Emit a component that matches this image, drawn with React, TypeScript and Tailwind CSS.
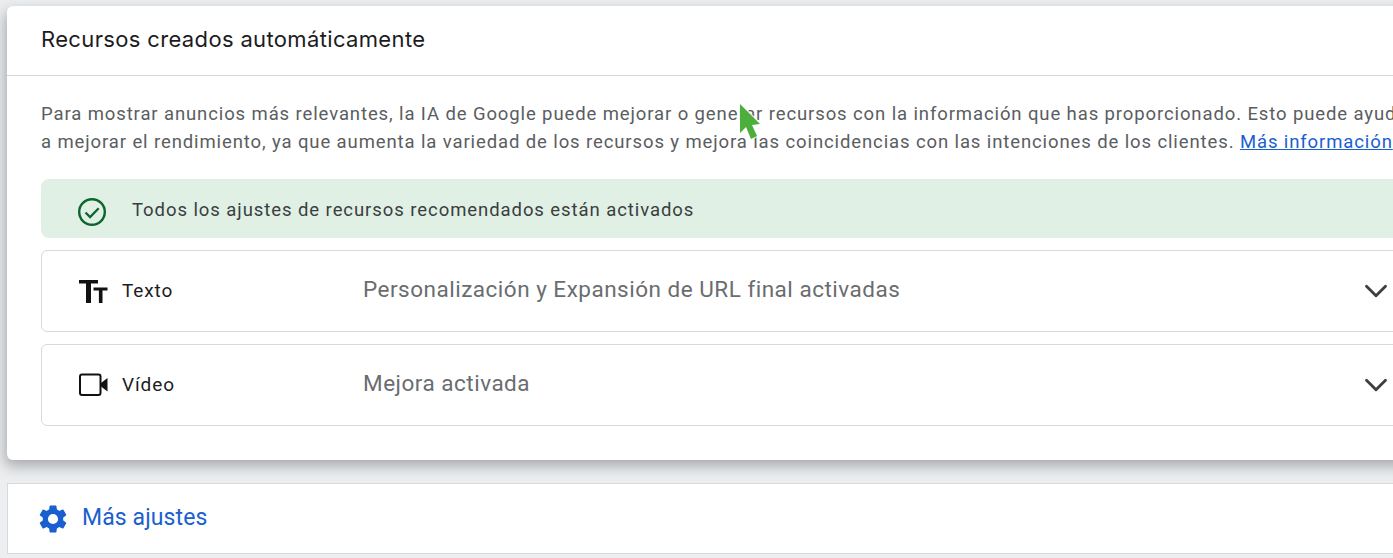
import { ChevronDown } from 'lucide-react'

const rows = [
  { label: 'Texto', detail: 'Personalización y Expansión de URL final activadas', icon: <TextIcon /> },
  { label: 'Vídeo', detail: 'Mejora activada', icon: <VideoIcon /> },
]

function TextIcon() {
  return (
    <svg width="30" height="24" viewBox="0 0 30 24" fill="#111">
      <path d="M1 1h19v3.6h-7V24H8V4.6H1z" />
      <path d="M15.500 8.500h14v3h-5V24h-3.600V11.500H15.500z" />
    </svg>
  )
}

function VideoIcon() {
  return (
    <svg width="30" height="24" viewBox="0 0 30 24" fill="none">
      <rect x="2" y="1.500" width="20.500" height="20.500" rx="2" stroke="#111" strokeWidth="2" />
      <path d="M23 10 L29.500 5 V18.500 L23 13.500 z" fill="#111" />
    </svg>
  )
}

function CheckIcon() {
  return (
    <svg width="30" height="30" viewBox="0 0 30 30" fill="none" stroke="#0d652d">
      <circle cx="15" cy="15" r="12.800" strokeWidth="2.400" />
      <path d="M8.500 15.500l4.600 4.600 8.600-8.800" strokeWidth="2.200" />
    </svg>
  )
}

function GearIcon() {
  return (
    <svg width="34" height="34" viewBox="0 0 24 24" fill="#1a5fd0">
      <path d="M19.14 12.94c.04-.3.06-.61.06-.94s-.02-.64-.07-.94l2.03-1.58a.49.49 0 0 0 .12-.61l-1.92-3.32a.49.49 0 0 0-.59-.22l-2.39.96c-.5-.38-1.03-.7-1.62-.94l-.36-2.54a.48.48 0 0 0-.48-.41h-3.84a.48.48 0 0 0-.47.41l-.36 2.54c-.59.24-1.13.57-1.62.94l-2.39-.96a.48.48 0 0 0-.59.22L2.74 8.87a.48.48 0 0 0 .12.61l2.03 1.58c-.05.3-.09.63-.09.94s.02.64.07.94l-2.03 1.58a.49.49 0 0 0-.12.61l1.92 3.32c.12.22.37.29.59.22l2.39-.96c.5.38 1.03.7 1.62.94l.36 2.54c.05.24.24.41.48.41h3.84c.24 0 .44-.17.47-.41l.36-2.54c.59-.24 1.13-.56 1.62-.94l2.39.96c.22.08.47 0 .59-.22l1.92-3.32a.48.48 0 0 0-.12-.61l-2.01-1.58zM12 15.600a3.600 3.600 0 1 1 0-7.200 3.600 3.600 0 0 1 0 7.200z" />
    </svg>
  )
}

function Cursor() {
  return (
    <svg className="absolute left-[736px] top-[101px]" width="28" height="42" viewBox="0 0 28 42">
      <path d="M4 3 L4 32 L10 26 L15 38 L21 35 L16 24 L24 23 z" fill="#4caf3c" stroke="#ffffff" strokeOpacity="0.8" strokeWidth="2.500" strokeLinejoin="round" paintOrder="stroke" />
    </svg>
  )
}

export default function App() {
  return (
    <div className="relative h-[558px] w-[1393px] overflow-hidden bg-[#eceef0] pl-[7px] pt-[6px] font-['Roboto',sans-serif]">
      {/* Card */}
      <div className="w-[1500px] rounded-[6px] bg-white shadow-[-2px_6px_14px_rgba(60,64,67,0.4)]">
        <div className="flex h-[70px] items-center border-b border-[#d5d7da] pb-[2px] pl-[34px]">
          <h2 className="whitespace-nowrap font-['Inter',sans-serif] text-[22px] tracking-[0.35px] text-[#1c1c1e]">
            Recursos creados automáticamente
          </h2>
        </div>

        <div className="px-[34px] pt-[24px]">
          <p className="whitespace-nowrap text-[18.5px] leading-[28px] tracking-[0.89px] text-[#5a5d61]">
            Para mostrar anuncios más relevantes, la IA de Google puede mejorar o generar recursos con la información que has proporcionado. Esto puede ayudarte
            <br />
            a mejorar el rendimiento, ya que aumenta la variedad de los recursos y mejora las coincidencias con las intenciones de los clientes.{' '}
            <a className="text-[#1a5fd0] underline">Más información</a>
          </p>

          <div className="mt-[23px] flex h-[59px] items-center rounded-[8px] bg-[#e0f0e5] pl-[36px]">
            <span className="mt-[7px]">
              <CheckIcon />
            </span>
            <span className="ml-[25px] mt-[5px] whitespace-nowrap text-[18.5px] tracking-[0.93px] text-[#3a3d40]">
              Todos los ajustes de recursos recomendados están activados
            </span>
          </div>

          <div className="mt-[12px] flex flex-col gap-[12px] pb-[34px]">
            {rows.map((row) => (
              <div key={row.label} className="flex h-[82px] items-center rounded-[6px] border border-[#d8d9dc] pl-[36px]">
                <div className="flex w-[285px] items-center gap-[14px]">
                  {row.icon}
                  <span className="text-[19px] tracking-[0.9px] text-[#1c1c1e]">{row.label}</span>
                </div>
                <span className="mb-[2px] w-[994px] whitespace-nowrap text-[22.5px] tracking-[0.5px] text-[#6a6d70]">{row.detail}</span>
                <ChevronDown className="text-[#3c4043]" size={38} strokeWidth={1.800} />
              </div>
            ))}
          </div>
        </div>
      </div>

      {/* Más ajustes */}
      <div className="mt-[23px] flex h-[71px] w-[1500px] items-center border border-[#d8d9dc] bg-white pl-[28px]">
        <GearIcon />
        <span className="ml-[12px] text-[23px] tracking-[0.1px] text-[#1a5fd0]">Más ajustes</span>
      </div>

      <Cursor />
    </div>
  )
}
